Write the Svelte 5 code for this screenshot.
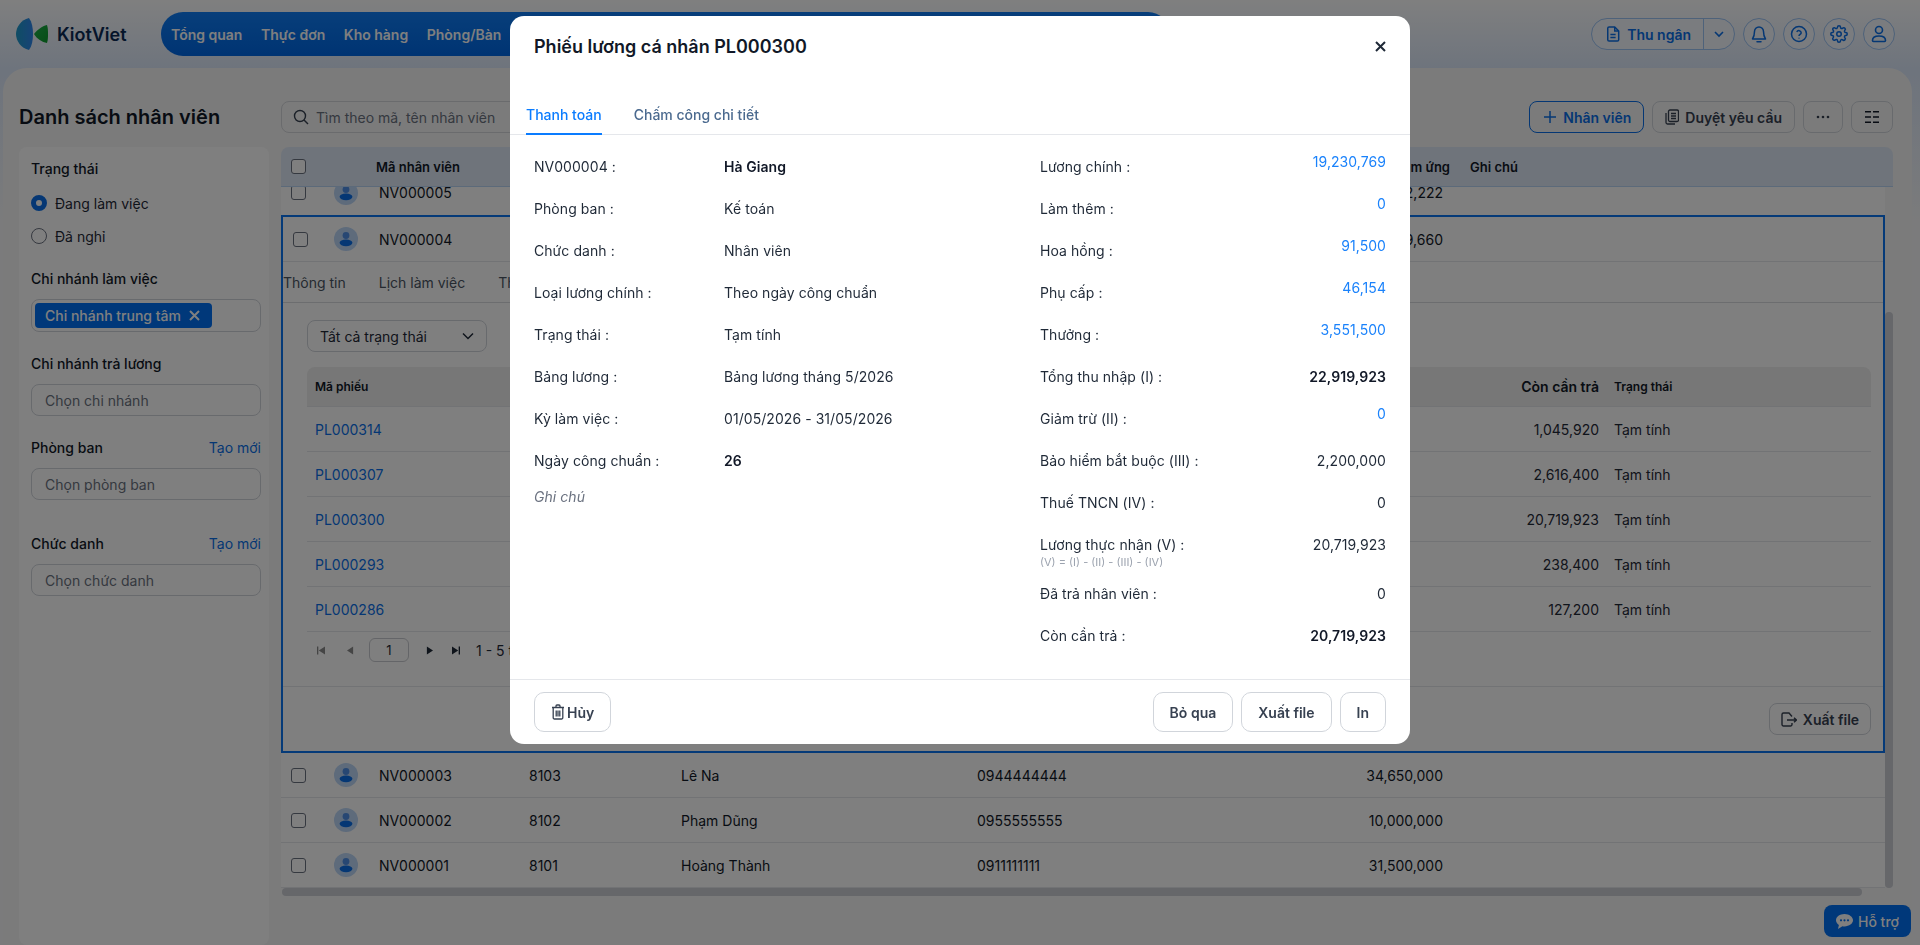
<script lang="ts">
  const nav = ['Tổng quan', 'Thực đơn', 'Kho hàng', 'Phòng/Bàn'];

  const slips = [
    { code: 'PL000314', due: '1,045,920' },
    { code: 'PL000307', due: '2,616,400' },
    { code: 'PL000300', due: '20,719,923' },
    { code: 'PL000293', due: '238,400' },
    { code: 'PL000286', due: '127,200' }
  ];

  const lowerRows = [
    { code: 'NV000003', id: '8103', name: 'Lê Na', phone: '0944444444', amount: '34,650,000' },
    { code: 'NV000002', id: '8102', name: 'Phạm Dũng', phone: '0955555555', amount: '10,000,000' },
    { code: 'NV000001', id: '8101', name: 'Hoàng Thành', phone: '0911111111', amount: '31,500,000' }
  ];

  const info = [
    { label: 'NV000004 :', value: 'Hà Giang', bold: true },
    { label: 'Phòng ban :', value: 'Kế toán' },
    { label: 'Chức danh :', value: 'Nhân viên' },
    { label: 'Loại lương chính :', value: 'Theo ngày công chuẩn' },
    { label: 'Trạng thái :', value: 'Tạm tính' },
    { label: 'Bảng lương :', value: 'Bảng lương tháng 5/2026' },
    { label: 'Kỳ làm việc :', value: '01/05/2026 - 31/05/2026' },
    { label: 'Ngày công chuẩn :', value: '26', bold: true }
  ];

  const money = [
    { label: 'Lương chính :', value: '19,230,769', link: true },
    { label: 'Làm thêm :', value: '0', link: true },
    { label: 'Hoa hồng :', value: '91,500', link: true },
    { label: 'Phụ cấp :', value: '46,154', link: true },
    { label: 'Thưởng :', value: '3,551,500', link: true },
    { label: 'Tổng thu nhập (I) :', value: '22,919,923', bold: true },
    { label: 'Giảm trừ (II) :', value: '0', link: true },
    { label: 'Bảo hiểm bắt buộc (III) :', value: '2,200,000' },
    { label: 'Thuế TNCN (IV) :', value: '0' },
    { label: 'Lương thực nhận (V) :', value: '20,719,923', note: '(V) = (I) - (II) - (III) - (IV)' },
    { label: 'Đã trả nhân viên :', value: '0' },
    { label: 'Còn cần trả :', value: '20,719,923', bold: true }
  ];
</script>

{#snippet avatar()}
  <span class="avatar">
    <svg width="24" height="24" viewBox="0 0 24 24">
      <circle cx="12" cy="8.5" r="3.4" fill="#4f8fe6" />
      <ellipse cx="12" cy="15.8" rx="6.4" ry="3.4" fill="#0a6fe8" />
    </svg>
  </span>
{/snippet}

<div class="page">
  <header class="topbar">
    <div class="logo">
      <svg width="33" height="32" viewBox="0 0 33 32">
        <defs>
          <linearGradient id="leaf" x1="0" y1="0" x2="1" y2="0">
            <stop offset="0" stop-color="#1f9bc9" />
            <stop offset="1" stop-color="#2f86ee" />
          </linearGradient>
          <linearGradient id="leaf2" x1="0" y1="0" x2="1" y2="1">
            <stop offset="0" stop-color="#1fb04a" />
            <stop offset="1" stop-color="#0c9a2c" />
          </linearGradient>
        </defs>
        <path d="M13 0C5 2 0 9 0 16c0 7 5 14 13 16 3-4 4-10 4-16S16 4 13 0z" fill="url(#leaf)" />
        <path d="M31 7c-5 1-10 5-13 9 3 5 8 8 13 9 1-3 1-6 1-9s0-6-1-9z" fill="url(#leaf2)" />
      </svg>
      <span class="brand">KiotViet</span>
    </div>
    <nav class="mainnav">
      {#each nav as item}
        <span>{item}</span>
      {/each}
    </nav>
    <div class="tools">
      <div class="cashier">
        <span class="cashier-main">
          <svg width="14" height="16" viewBox="0 0 16 18" fill="none" stroke="currentColor" stroke-width="1.7">
            <path d="M2 2.500A1.500 1.500 0 0 1 3.500 1H10l4.500 4.500v10A1.500 1.500 0 0 1 13 17H3.500A1.500 1.500 0 0 1 2 15.500z" stroke-linejoin="round" />
            <path d="M10 1v4.500h4.500M5 9.500h6M5 13h6" />
          </svg>
          Thu ngân
        </span>
        <span class="cashier-more">
          <svg width="12" height="12" viewBox="0 0 12 12" fill="none" stroke="currentColor" stroke-width="1.6"><path d="M2 4l4 4 4-4" /></svg>
        </span>
      </div>
      <span class="round">
        <svg width="16" height="18" viewBox="0 0 16 18" fill="none" stroke="currentColor" stroke-width="1.5" stroke-linejoin="round">
          <path d="M8 2a4.500 4.500 0 0 0-4.500 4.500c0 4-1 6-2 7.500h13c-1-1.500-2-3.500-2-7.500A4.500 4.500 0 0 0 8 2z" />
          <path d="M6 16.800h4" stroke-linecap="round" />
        </svg>
      </span>
      <span class="round">
        <svg width="18" height="18" viewBox="0 0 18 18" fill="none" stroke="currentColor" stroke-width="1.5">
          <circle cx="9" cy="9" r="7.500" />
          <path d="M6.800 7a2.300 2.300 0 0 1 4.400.8c0 1.500-2.200 1.800-2.200 3.200" />
          <path d="M9 12.700v.8" />
        </svg>
      </span>
      <span class="round">
        <svg width="18" height="18" viewBox="0 0 24 24" fill="none" stroke="currentColor" stroke-width="2" stroke-linejoin="round">
          <circle cx="12" cy="12" r="3" />
          <path d="M19.400 15a1.700 1.700 0 0 0 .3 1.800l.1.100a2 2 0 1 1-2.900 2.900l-.1-.1a1.700 1.700 0 0 0-2.800 1.200V21a2 2 0 1 1-4 0v-.1a1.700 1.700 0 0 0-2.900-1.200l-.1.100a2 2 0 1 1-2.800-2.900l.1-.1a1.700 1.700 0 0 0-1.200-2.800H3a2 2 0 1 1 0-4h.1a1.700 1.700 0 0 0 1.200-2.900l-.1-.1a2 2 0 1 1 2.900-2.800l.1.100a1.700 1.700 0 0 0 1.800.3H9a1.700 1.700 0 0 0 1-1.500V3a2 2 0 1 1 4 0v.1a1.700 1.700 0 0 0 2.900 1.200l.1-.1a2 2 0 1 1 2.800 2.900l-.1.100a1.700 1.700 0 0 0-.3 1.800V9a1.700 1.700 0 0 0 1.500 1H21a2 2 0 1 1 0 4h-.1a1.700 1.700 0 0 0-1.500 1z" />
        </svg>
      </span>
      <span class="round">
        <svg width="16" height="18" viewBox="0 0 16 18" fill="none" stroke="currentColor" stroke-width="1.6">
          <circle cx="8" cy="5" r="3.500" />
          <path d="M1.500 15.500c0-3 2.500-4.500 6.500-4.500s6.500 1.500 6.500 4.500c0 .8-.5 1-1 1h-11c-.5 0-1-.2-1-1z" />
        </svg>
      </span>
    </div>
  </header>

  <main class="panel">
    <h1>Danh sách nhân viên</h1>

    <div class="toolbar">
      <div class="search">
        <svg width="16" height="16" viewBox="0 0 16 16" fill="none" stroke="#374151" stroke-width="1.4">
          <circle cx="7" cy="7" r="5.500" />
          <path d="M11 11l4 4" />
        </svg>
        <span>Tìm theo mã, tên nhân viên</span>
      </div>
      <div class="actions">
        <button class="btn primary">
          <svg width="14" height="14" viewBox="0 0 14 14" stroke="currentColor" stroke-width="1.5"><path d="M7 1v12M1 7h12" /></svg>
          Nhân viên
        </button>
        <button class="btn">
          <svg width="14" height="16" viewBox="0 0 14 16" fill="none" stroke="currentColor" stroke-width="1.300">
            <rect x="3.500" y="1" width="10" height="11.500" rx="1.500" />
            <path d="M1 4v9.500A1.500 1.500 0 0 0 2.500 15H10M6 4.500h5M6 7h5M6 9.500h5" />
          </svg>
          Duyệt yêu cầu
        </button>
        <button class="btn square">
          <svg width="14" height="4" viewBox="0 0 14 4" fill="currentColor"><circle cx="2" cy="2" r="1.300" /><circle cx="7" cy="2" r="1.300" /><circle cx="12" cy="2" r="1.300" /></svg>
        </button>
        <button class="btn square wide">
          <svg width="16" height="14" viewBox="0 0 16 14" fill="currentColor">
            <path d="M1 1h6v1.600H1zM9 1h6v1.600H9zM1 6.200h6v1.600H1zM9 6.200h6v1.600H9zM1 11.400h6V13H1zM9 11.400h6V13H9z" />
          </svg>
        </button>
      </div>
    </div>

    <aside class="filters">
      <div class="flabel first">Trạng thái</div>
      <label class="radio on"><i></i>Đang làm việc</label>
      <label class="radio"><i></i>Đã nghỉ</label>

      <div class="flabel gap23">Chi nhánh làm việc</div>
      <div class="chips">
        <span class="chip">
          Chi nhánh trung tâm
          <svg width="11" height="11" viewBox="0 0 11 11" stroke="currentColor" stroke-width="2"><path d="M1 1l9 9M10 1l-9 9" /></svg>
        </span>
      </div>

      <div class="flabel gap22">Chi nhánh trả lương</div>
      <div class="field">Chọn chi nhánh</div>

      <div class="flabel gap22 split">Phòng ban <span class="create">Tạo mới</span></div>
      <div class="field">Chọn phòng ban</div>

      <div class="flabel gap34 split">Chức danh <span class="create">Tạo mới</span></div>
      <div class="field">Chọn chức danh</div>
    </aside>

    <section class="grid">
      <div class="ghead">
        <span class="check"></span>
        <span>Mã nhân viên</span>
        <span class="hdebt">Nợ và tạm ứng</span>
        <span class="hnote">Ghi chú</span>
      </div>

      <div class="gscroll">
        <div class="gbody">
          <div class="row clipped">
            <span class="check"></span>
            {@render avatar()}
            <span>NV000005</span>
            <span class="amount">2,222</span>
          </div>

          <div class="expanded">
            <div class="row">
              <span class="check"></span>
              {@render avatar()}
              <span>NV000004</span>
              <span class="amount">9,660</span>
            </div>
            <div class="dtabs">
              <span>Thông tin</span>
              <span>Lịch làm việc</span>
              <span>Thiết lập lương</span>
            </div>
            <div class="dpane">
              <div class="select">
                Tất cả trạng thái
                <svg width="14" height="14" viewBox="0 0 14 14" fill="none" stroke="#1f2937" stroke-width="1.500"><path d="M2 4.500l5 5 5-5" /></svg>
              </div>
              <div class="subhead">
                <span class="sub-code">Mã phiếu</span>
                <span class="sub-due">Còn cần trả</span>
                <span class="sub-state">Trạng thái</span>
              </div>
              {#each slips as s}
                <div class="subrow">
                  <a href="#top" class="sub-link">{s.code}</a>
                  <span class="sub-val">{s.due}</span>
                  <span class="sub-st">Tạm tính</span>
                </div>
              {/each}
              <div class="pager">
                <svg width="8" height="9" viewBox="0 0 9 9" fill="#8b8b8b"><path d="M0 0h1.500v9H0zM9 0v9L2 4.500z" /></svg>
                <svg class="p2" width="7" height="9" viewBox="0 0 8 9" fill="#8b8b8b"><path d="M7 0v9L0 4.500z" /></svg>
                <span class="pageno">1</span>
                <svg width="7" height="9" viewBox="0 0 8 9" fill="#1f2937"><path d="M1 0v9l7-4.500z" /></svg>
                <svg class="p4" width="8" height="9" viewBox="0 0 9 9" fill="#1f2937"><path d="M0 0v9l7-4.500zM7.500 0H9v9H7.500z" /></svg>
                <span class="pcount">1 - 5 trong 5 phiếu</span>
              </div>
            </div>
            <div class="dfoot">
              <button class="btn">
                <svg width="16" height="15" viewBox="0 0 16 15" fill="none" stroke="currentColor" stroke-width="1.400">
                  <path d="M11 4.500L8 1H2.500A1.500 1.500 0 0 0 1 2.500v10A1.500 1.500 0 0 0 2.500 14H9.500A1.500 1.500 0 0 0 11 12.500V11" />
                  <path d="M6 8h9.500M13 5.800L15.400 8 13 10.200" />
                </svg>
                Xuất file
              </button>
            </div>
          </div>

          {#each lowerRows as r}
            <div class="row">
              <span class="check"></span>
              {@render avatar()}
              <span>{r.code}</span>
              <span>{r.id}</span>
              <span>{r.name}</span>
              <span class="phone">{r.phone}</span>
              <span class="amount">{r.amount}</span>
            </div>
          {/each}
        </div>
        <div class="vbar"><i></i></div>
      </div>
      <div class="hbar"><i></i></div>
    </section>
  </main>

  <button class="support">
    <svg width="17" height="15" viewBox="0 0 17 15" fill="currentColor">
      <path d="M8.500 0C3.800 0 0 2.800 0 6.300c0 1.900 1.100 3.500 2.900 4.700L2 15l4.400-2.800c.7.100 1.400.2 2.100.2 4.700 0 8.500-2.800 8.500-6.100S13.200 0 8.500 0z" />
      <circle cx="5" cy="6.300" r="1.100" fill="#0070f4" /><circle cx="8.500" cy="6.300" r="1.100" fill="#0070f4" /><circle cx="12" cy="6.300" r="1.100" fill="#0070f4" />
    </svg>
    Hỗ trợ
  </button>

  <div class="backdrop"></div>

  <div class="modal">
    <div class="mhead">
      <h2>Phiếu lương cá nhân PL000300</h2>
      <svg width="11" height="11" viewBox="0 0 11 11" stroke="#1f2937" stroke-width="2"><path d="M1 1l9 9M10 1l-9 9" /></svg>
    </div>
    <div class="mtabs">
      <span class="active">Thanh toán</span>
      <span>Chấm công chi tiết</span>
    </div>
    <div class="mbody">
      <div class="col">
        {#each info as i}
          <div class="irow">
            <span class="ilabel">{i.label}</span>
            <span class:bold={i.bold}>{i.value}</span>
          </div>
        {/each}
        <div class="memo">Ghi chú</div>
      </div>
      <div class="col">
        {#each money as m}
          <div class="mrow" class:tall={m.note}>
            <div>
              {m.label}
              {#if m.note}<div class="note">{m.note}</div>{/if}
            </div>
            <span class="mval" class:link={m.link} class:bold={m.bold}>{m.value}</span>
          </div>
        {/each}
      </div>
    </div>
    <div class="mfoot">
      <button class="mbtn del">
        <svg width="14" height="16" viewBox="0 0 14 16" fill="none" stroke="currentColor" stroke-width="1.300">
          <path d="M1 3.500h12M5 3.500V2a1 1 0 0 1 1-1h2a1 1 0 0 1 1 1v1.500M2.200 3.500v10.300A1.200 1.200 0 0 0 3.400 15h7.200a1.200 1.200 0 0 0 1.200-1.200V3.500M5.200 6.500v6M7 6.500v6M8.800 6.500v6" />
        </svg>
        Hủy
      </button>
      <div class="mfoot-right">
        <button class="mbtn">Bỏ qua</button>
        <button class="mbtn">Xuất file</button>
        <button class="mbtn">In</button>
      </div>
    </div>
  </div>
</div>

<style>
  :global(body) {
    margin: 0;
    font-family: Inter, 'Noto Sans', sans-serif;
    font-size: 14px;
    color: #1f2937;
  }
  .page {
    position: relative;
    width: 1920px;
    height: 945px;
    overflow: hidden;
    background: linear-gradient(180deg, #fff 0, #dce8fa 70px, #f6f7f9 220px, #f6f7f9 100%);
  }
  h1, h2 {
    margin: 0;
    font-weight: 600;
  }
  button {
    font-family: inherit;
    cursor: pointer;
  }

  .topbar {
    display: flex;
    align-items: center;
    height: 68px;
    padding: 0 25px 0 16px;
    box-sizing: border-box;
  }
  .logo {
    display: flex;
    align-items: center;
    gap: 8px;
    width: 145px;
  }
  .brand {
    font-size: 18px;
    font-weight: 600;
    color: #0b2a55;
  }
  .mainnav {
    display: flex;
    align-items: center;
    gap: 18.5px;
    width: 1009px;
    height: 44px;
    padding-left: 10px;
    box-sizing: border-box;
    border-radius: 22px;
    background: linear-gradient(180deg, #0f7df5 0, #0068e6 100%);
    color: #fff;
    font-weight: 600;
  }
  .tools {
    display: flex;
    align-items: center;
    gap: 8px;
    margin-left: auto;
    color: #0a6fe8;
  }
  .cashier {
    display: flex;
    align-items: center;
    height: 32px;
    border: 1px solid #9cc4f5;
    border-radius: 16px;
    box-sizing: border-box;
    background: #f4f8fe;
    font-weight: 600;
  }
  .cashier-main {
    display: flex;
    align-items: center;
    gap: 7px;
    height: 100%;
    padding: 0 12px 0 14px;
    border-right: 1px solid #9cc4f5;
  }
  .cashier-more {
    display: flex;
    align-items: center;
    padding: 0 9px;
  }
  .round {
    display: flex;
    align-items: center;
    justify-content: center;
    width: 32px;
    height: 32px;
    border: 1px solid #9cc4f5;
    border-radius: 50%;
    box-sizing: border-box;
    background: #f4f8fe;
  }

  .panel {
    display: grid;
    grid-template-columns: 250px 1fr;
    grid-template-rows: 32px 1fr;
    column-gap: 12px;
    row-gap: 14px;
    width: 1909px;
    height: 877px;
    margin-left: 3px;
    padding: 33px 19px 0 16px;
    box-sizing: border-box;
    border-radius: 24px 24px 0 0;
    background: #f7f7f7;
  }
  h1 {
    font-size: 20px;
    line-height: 32px;
    color: #111827;
  }
  .toolbar {
    display: flex;
    justify-content: space-between;
  }
  .search {
    display: flex;
    align-items: center;
    gap: 7px;
    width: 500px;
    padding-left: 11px;
    box-sizing: border-box;
    border: 1px solid #d4d6da;
    border-radius: 8px;
    color: #6b7280;
  }
  .actions {
    display: flex;
    gap: 8px;
  }
  .btn {
    display: flex;
    align-items: center;
    justify-content: center;
    gap: 6px;
    height: 32px;
    padding: 0 12px;
    box-sizing: border-box;
    border: 1px solid #d1d5db;
    border-radius: 8px;
    background: transparent;
    color: #374151;
    font-size: 14px;
    font-weight: 600;
  }
  .btn.primary {
    padding: 0 12px 0 13px;
    border-color: #0a6fe8;
    color: #0a6fe8;
  }
  .btn.square {
    width: 40px;
    padding: 0;
  }
  .btn.wide {
    width: 42px;
    color: #111827;
  }

  .filters {
    padding: 12px 8px 0 12px;
    border-radius: 8px;
    background: #fff;
  }
  .flabel {
    line-height: 20px;
    font-weight: 500;
    color: #111827;
  }
  .gap23 { margin-top: 23px; }
  .gap22 { margin-top: 22px; }
  .gap34 { margin-top: 34px; }
  .split {
    display: flex;
    justify-content: space-between;
  }
  .create {
    font-weight: 400;
    color: #0a6fe8;
  }
  .radio {
    display: flex;
    align-items: center;
    gap: 8px;
    height: 20px;
    margin-top: 13px;
    color: #1f2937;
  }
  .first + .radio {
    margin-top: 14px;
  }
  .radio i {
    width: 16px;
    height: 16px;
    border: 1px solid #6b7280;
    border-radius: 50%;
    box-sizing: border-box;
  }
  .radio.on i {
    border: 5px solid #0a6fe8;
    background: #fff;
  }
  .chips {
    height: 33px;
    margin-top: 10px;
    padding: 3px;
    box-sizing: border-box;
    border: 1px solid #d1d5db;
    border-radius: 8px;
  }
  .chip {
    display: inline-flex;
    align-items: center;
    gap: 8px;
    height: 25px;
    padding: 0 12px 0 10px;
    box-sizing: border-box;
    border-radius: 4px;
    background: #0070f4;
    color: #fff;
    font-weight: 500;
  }
  .field {
    display: flex;
    align-items: center;
    height: 32px;
    margin-top: 10px;
    padding-left: 13px;
    box-sizing: border-box;
    border: 1px solid #d1d5db;
    border-radius: 8px;
    color: #6b7280;
  }

  .grid {
    min-width: 0;
  }
  .ghead {
    display: grid;
    grid-template-columns: 85px 200px 874px 1fr;
    align-items: center;
    height: 40px;
    padding-left: 10px;
    box-sizing: border-box;
    border-bottom: 1px solid #b9d4f5;
    border-radius: 8px 8px 0 0;
    background: #dfe9f7;
    font-size: 13px;
    font-weight: 600;
    white-space: nowrap;
    color: #111827;
  }
  .hdebt {
    text-align: right;
  }
  .hnote {
    padding-left: 20px;
  }
  .check {
    width: 15px;
    height: 15px;
    border: 1px solid #6b7280;
    border-radius: 3px;
    box-sizing: border-box;
    background: #fff;
  }
  .gscroll {
    display: flex;
    height: 701px;
    overflow: hidden;
  }
  .gbody {
    width: 1604px;
    flex: none;
  }
  .vbar {
    flex: 1;
  }
  .vbar i {
    display: block;
    width: 8px;
    height: 576px;
    margin-top: 125px;
    border-radius: 4px;
    background: #ccced4;
  }
  .hbar {
    height: 8px;
  }
  .hbar i {
    display: block;
    width: 1580px;
    height: 8px;
    margin-left: 1px;
    border-radius: 4px;
    background: #ccced4;
  }
  .row {
    display: grid;
    grid-template-columns: 43px 45px 150px 152px 296px 466px 1fr;
    align-items: center;
    height: 45px;
    padding-left: 10px;
    box-sizing: border-box;
    border-bottom: 1px solid #e5e7eb;
    background: #fff;
    color: #111827;
  }
  .clipped {
    margin-top: -17px;
    border-bottom: none;
  }
  .expanded .row {
    grid-template-columns: 41px 45px 150px 152px 296px 466px 1fr;
  }
  .phone, .amount {
    grid-column: 6;
    grid-row: 1;
  }
  .amount {
    text-align: right;
  }
  .avatar {
    display: flex;
    width: 24px;
    height: 24px;
    border-radius: 50%;
    background: #bcd6f7;
  }

  .expanded {
    border: 2px solid #0a74f0;
    background: #fff;
  }
  .dtabs {
    display: flex;
    align-items: center;
    gap: 33px;
    height: 41px;
    box-sizing: border-box;
    border-bottom: 1px solid #d9dbde;
    color: #4b5563;
  }
  .dpane {
    height: 384px;
    padding: 17px 12px 0 24px;
    box-sizing: border-box;
    border-bottom: 1px solid #e5e7eb;
  }
  .select {
    display: flex;
    align-items: center;
    justify-content: space-between;
    width: 180px;
    height: 32px;
    margin-bottom: 15px;
    padding: 0 11px 0 12px;
    box-sizing: border-box;
    border: 1px solid #d1d5db;
    border-radius: 8px;
  }
  .subhead, .subrow {
    display: grid;
    grid-template-columns: 208px 1084px 272px;
    align-items: center;
    box-sizing: border-box;
    border-bottom: 1px solid #e5e7eb;
  }
  .subhead {
    height: 40px;
    border-radius: 8px 8px 0 0;
    background: #eee;
    font-weight: 600;
    color: #111827;
  }
  .subrow {
    height: 45px;
  }
  .sub-code {
    padding-left: 8px;
    font-size: 12px;
  }
  .sub-due, .sub-val {
    text-align: right;
  }
  .sub-state {
    padding-left: 15px;
    font-size: 12px;
  }
  .sub-st {
    padding-left: 15px;
  }
  .sub-link {
    padding-left: 8px;
    color: #0a6fe8;
    text-decoration: none;
  }
  .pager {
    display: flex;
    align-items: center;
    height: 24px;
    margin-top: 6px;
    padding-left: 10px;
  }
  .p2 {
    margin-left: 22px;
  }
  .pageno {
    display: flex;
    align-items: center;
    justify-content: center;
    width: 40px;
    height: 24px;
    margin: 0 17px 0 15px;
    border: 1px solid #c9cbd0;
    border-radius: 6px;
    box-sizing: border-box;
    font-size: 13px;
  }
  .p4 {
    margin-left: 19px;
  }
  .pcount {
    margin-left: 16px;
  }
  .dfoot {
    display: flex;
    justify-content: flex-end;
    height: 64px;
    padding: 16px 12px 0 0;
    box-sizing: border-box;
  }
  .dfoot .btn {
    width: 102px;
    padding: 0;
  }

  .support {
    position: absolute;
    right: 9px;
    bottom: 8px;
    display: flex;
    align-items: center;
    gap: 5px;
    width: 87px;
    height: 32px;
    padding: 0 0 0 12px;
    border: none;
    border-radius: 8px;
    background: #0070f4;
    color: #fff;
    font-size: 14px;
    font-weight: 500;
  }

  .backdrop {
    position: absolute;
    inset: 0;
    background: rgba(0, 0, 0, 0.5);
    backdrop-filter: blur(0.6px);
  }
  .modal {
    position: absolute;
    left: 510px;
    top: 16px;
    display: flex;
    flex-direction: column;
    width: 900px;
    height: 728px;
    border-radius: 14px;
    background: #fff;
    color: #1f2937;
  }
  .mhead {
    display: flex;
    align-items: center;
    justify-content: space-between;
    height: 60px;
    padding: 0 24px;
  }
  h2 {
    font-size: 18px;
    color: #111827;
  }
  .mtabs {
    display: flex;
    gap: 32px;
    height: 38px;
    margin-top: 21px;
    padding-left: 16px;
    box-sizing: border-box;
    border-bottom: 1px solid #e5e7eb;
    color: #4b6a8f;
    font-weight: 500;
  }
  .mtabs span {
    height: 38px;
    box-sizing: border-box;
    line-height: 36px;
  }
  .mtabs .active {
    border-bottom: 2px solid #0a7cff;
    color: #0a7cff;
  }
  .mbody {
    display: grid;
    grid-template-columns: 506px 346px;
    flex: 1;
    padding: 0 24px;
    letter-spacing: 0.06px;
  }
  .col {
    padding-top: 11px;
  }
  .irow, .mrow {
    height: 42px;
    padding-top: 11px;
    box-sizing: border-box;
    line-height: 20px;
  }
  .irow {
    display: flex;
  }
  .ilabel {
    width: 190px;
    flex: none;
  }
  .bold {
    font-weight: 600;
    color: #111827;
  }
  .memo {
    margin-top: 5px;
    line-height: 20px;
    font-style: italic;
    color: #6b7280;
  }
  .mrow {
    display: flex;
    justify-content: space-between;
  }
  .mrow.tall {
    height: 49px;
  }
  .note {
    line-height: 14px;
    font-size: 11px;
    letter-spacing: 0;
    color: #9ca3af;
  }
  .mval.link {
    margin-top: -5px;
    color: #1a82fb;
  }
  .mfoot {
    display: flex;
    justify-content: space-between;
    padding: 12px 24px;
    border-top: 1px solid #e5e7eb;
  }
  .mfoot-right {
    display: flex;
    gap: 8px;
  }
  .mbtn {
    display: flex;
    align-items: center;
    justify-content: center;
    gap: 2px;
    height: 40px;
    padding: 0 16px;
    box-sizing: border-box;
    border: 1px solid #d1d5db;
    border-radius: 10px;
    background: #fff;
    color: #374151;
    font-size: 14px;
    font-weight: 600;
  }
</style>
